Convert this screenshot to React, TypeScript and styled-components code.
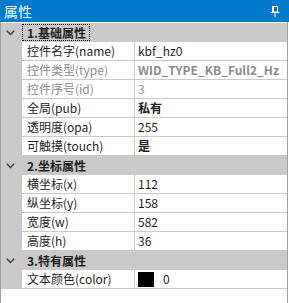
import * as React from 'react'
import styled, { createGlobalStyle } from 'styled-components'

const GlobalStyle = createGlobalStyle`
  html, body {
    margin: 0;
    padding: 0;
    background: #fff;
  }
  body {
    font-family: "Noto Sans CJK SC", "Noto Sans", sans-serif;
    font-size: 12px;
  }
`

type Prop = {
  name: string
  value: React.ReactNode
  readonly?: boolean
  bold?: boolean
}

type Group = {
  title: string
  focused?: boolean
  items: Prop[]
}

const groups: Group[] = [
  {
    title: '1.基础属性',
    focused: true,
    items: [
      { name: '控件名字(name)', value: 'kbf_hz0' },
      { name: '控件类型(type)', value: 'WID_TYPE_KB_Full2_Hz', readonly: true, bold: true },
      { name: '控件序号(id)', value: '3', readonly: true },
      { name: '全局(pub)', value: '私有', bold: true },
      { name: '透明度(opa)', value: '255' },
      { name: '可触摸(touch)', value: '是', bold: true },
    ],
  },
  {
    title: '2.坐标属性',
    items: [
      { name: '横坐标(x)', value: '112' },
      { name: '纵坐标(y)', value: '158' },
      { name: '宽度(w)', value: '582' },
      { name: '高度(h)', value: '36' },
    ],
  },
  {
    title: '3.特有属性',
    items: [{ name: '文本颜色(color)', value: 'color' }],
  },
]

const PinIcon = () => (
  <svg width="10" height="12" viewBox="0 0 10 12" fill="none">
    <path d="M2.5 1.5h5v5.5h-5z" stroke="#fff" strokeWidth="1" />
    <path d="M3 1v6.5" stroke="#fff" strokeWidth="2" />
    <path d="M0.5 7.5h9" stroke="#fff" strokeWidth="1" />
    <path d="M5 8v4" stroke="#fff" strokeWidth="1" />
  </svg>
)

const Chevron = () => (
  <svg width="9" height="6" viewBox="0 0 9 6" fill="none">
    <path d="M0.8 0.8L4.5 4.5L8.2 0.8" stroke="#3c3c3c" strokeWidth="1.5" />
  </svg>
)

const App: React.FC = () => (
  <>
    <GlobalStyle />
    <Panel>
      <TitleBar>
        <Title>属性</Title>
        <PinButton>
          <PinIcon />
        </PinButton>
      </TitleBar>
      <Grid>
        {groups.map((g) => (
          <React.Fragment key={g.title}>
            <CategoryRow>
              <Toggle>
                <Chevron />
              </Toggle>
              <CategoryLabel $focused={g.focused}>{g.title}</CategoryLabel>
            </CategoryRow>
            {g.items.map((p) => (
              <PropRow key={p.name}>
                <Margin />
                <NameCell $readonly={p.readonly}>{p.name}</NameCell>
                <ValueCell $readonly={p.readonly} $bold={p.bold}>
                  {p.value === 'color' ? (
                    <>
                      <Swatch />
                      <span>0</span>
                    </>
                  ) : (
                    p.value
                  )}
                </ValueCell>
              </PropRow>
            ))}
          </React.Fragment>
        ))}
      </Grid>
    </Panel>
  </>
)

const Panel = styled.div`
  width: 289px;
  height: 303px;
  display: flex;
  flex-direction: column;
  background: #fff;
  overflow: hidden;
`

const TitleBar = styled.div`
  height: 22px;
  background: #007acc;
  display: flex;
  align-items: center;
  justify-content: space-between;
  padding: 0 9px 0 4px;
`

const Title = styled.span`
  color: #fff;
  font-size: 14px;
  line-height: 22px;
`

const PinButton = styled.span`
  display: flex;
  align-items: center;
  margin-top: -1px;
`

const Grid = styled.div`
  flex: 1;
  margin-right: 1px;
  border-left: 1px solid #a0a0a0;
  border-right: 1px solid #a0a0a0;
  padding-top: 1px;
  background: #fff;
`

const CategoryRow = styled.div`
  height: 19px;
  display: flex;
  align-items: center;
  background: #cacaca;
`

const Toggle = styled.span`
  width: 21px;
  display: flex;
  justify-content: center;
  padding-right: 3px;
  box-sizing: border-box;
`

const CategoryLabel = styled.span<{ $focused?: boolean }>`
  font-weight: bold;
  color: #1e1e1e;
  font-size: 12px;
  line-height: 15px;
  padding: 0 3px 0 4px;
  border: 1px dotted ${(p) => (p.$focused ? '#000' : 'transparent')};
`

const PropRow = styled.div`
  height: 19px;
  display: grid;
  grid-template-columns: 21px 113px 1fr;
`

const Margin = styled.span`
  background: #cacaca;
`

const NameCell = styled.span<{ $readonly?: boolean }>`
  border-bottom: 1px solid #cacaca;
  border-right: 1px solid #cacaca;
  color: ${(p) => (p.$readonly ? '#8d8d8d' : '#1e1e1e')};
  padding-left: 5px;
  line-height: 18px;
  white-space: nowrap;
  overflow: hidden;
`

const ValueCell = styled.span<{ $readonly?: boolean; $bold?: boolean }>`
  border-bottom: 1px solid #cacaca;
  color: ${(p) => (p.$readonly ? '#8d8d8d' : '#1e1e1e')};
  font-weight: ${(p) => (p.$bold ? 'bold' : 'normal')};
  font-family: "Noto Sans CJK SC", "Noto Sans", sans-serif;
  padding-left: 3px;
  line-height: 18px;
  display: flex;
  align-items: center;
  gap: 9px;
  white-space: nowrap;
  overflow: hidden;
`

const Swatch = styled.span`
  width: 16px;
  height: 15px;
  background: #000;
  flex: none;
`

export default App
